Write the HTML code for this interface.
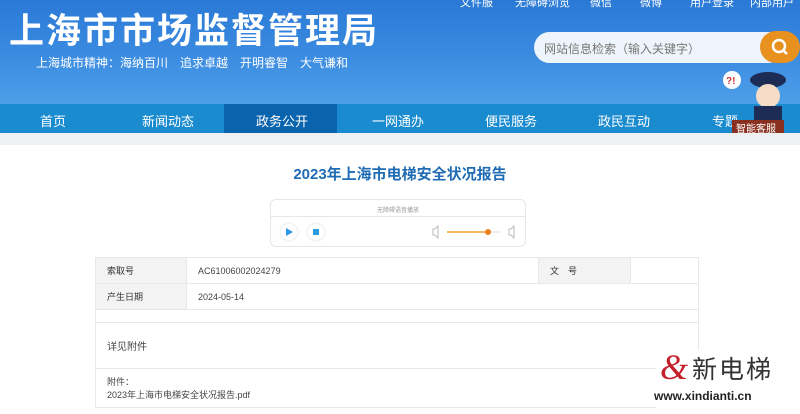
<!DOCTYPE html>
<html><head><meta charset="utf-8"><style>
*{margin:0;padding:0;box-sizing:border-box}
body{width:800px;height:414px;overflow:hidden;background:#fff;font-family:"Liberation Sans","Noto Sans CJK SC",sans-serif;position:relative}
.hdr{position:absolute;left:0;top:0;width:800px;height:104px;background:linear-gradient(180deg,#2a79d6 0%,#3a8ae0 50%,#4d9fe8 100%)}
.title{position:absolute;left:9px;top:3px;font-size:35px;font-weight:bold;color:#fff;letter-spacing:2px}
.sub{position:absolute;left:36px;top:54px;font-size:12px;color:#fff}
.top{position:absolute;top:-6px;font-size:11px;color:#fff}
.search{position:absolute;left:534px;top:32px;width:250px;height:31px;background:#eef4fb;border-radius:16px;font-size:12px;color:#777;padding:8px 0 0 10px}
.sbtn{position:absolute;left:760px;top:31px;width:40px;height:32px;background:#e8911f;border-radius:16px}
.nav{position:absolute;left:0;top:104px;width:800px;height:29px;background:#1a8bcf}
.nav span{position:absolute;top:7px;font-size:13px;color:#fff}
.act{position:absolute;left:224px;top:104px;width:113px;height:29px;background:#0a63ad}
.strip{position:absolute;left:0;top:133px;width:800px;height:12px;background:#eef0f2}
h1{position:absolute;left:0;width:800px;top:163px;text-align:center;font-size:15px;color:#1f6cb5;font-weight:bold}
.player{position:absolute;left:270px;top:199px;width:256px;height:48px;border:1px solid #e6e6e6;border-radius:6px}
table{position:absolute;left:95px;top:257px;width:604px;border-collapse:collapse;font-size:9px;color:#444}
td{border:1px solid #e8e8e8;padding:0 11px}
.l{background:#f3f3f3;color:#333}
</style></head><body>
<div class="hdr"></div>
<div class="title">上海市市场监督管理局</div>
<div class="sub">上海城市精神：海纳百川　追求卓越　开明睿智　大气谦和</div>
<div class="top" style="left:460px">文件服</div><div class="top" style="left:515px">无障碍浏览</div><div class="top" style="left:590px">微信</div><div class="top" style="left:640px">微博</div><div class="top" style="left:690px">用户登录</div><div class="top" style="left:750px">内部用户</div>
<div class="search">网站信息检索（输入关键字）</div>
<div class="sbtn"><svg width="40" height="32"><circle cx="19" cy="15" r="6" fill="none" stroke="#fff" stroke-width="2.5"/><line x1="23" y1="19" x2="27" y2="23" stroke="#fff" stroke-width="2.5"/></svg></div>
<div class="nav"><span style="left:40px">首页</span><span style="left:142px">新闻动态</span><span style="left:372px">一网通办</span><span style="left:485px">便民服务</span><span style="left:598px">政民互动</span><span style="left:712px">专题</span></div>
<div class="act"></div><span style="position:absolute;left:256px;top:111px;font-size:13px;color:#fff">政务公开</span>
<svg style="position:absolute;left:718px;top:66px" width="82" height="72"><circle cx="14" cy="14" r="9" fill="#fff"/><text x="8" y="18" font-size="10" fill="#c33" font-weight="bold">?!</text><ellipse cx="50" cy="14" rx="18" ry="8" fill="#1c2c55"/><circle cx="50" cy="30" r="12" fill="#f5dcc6"/><rect x="36" y="40" width="28" height="16" fill="#1c2c55"/><rect x="14" y="54" width="52" height="18" fill="#8a3020"/><text x="18" y="66" font-size="10" fill="#fff">智能客服</text></svg>
<div class="strip"></div>
<h1>2023年上海市电梯安全状况报告</h1>
<div class="player"><div style="height:17px;border-bottom:1px solid #e6e6e6;text-align:center;font-size:6px;color:#999;padding-top:5px">无障碍语音播放</div>
<svg width="256" height="30"><circle cx="18" cy="15" r="9" fill="none" stroke="#eee"/><polygon points="15,11 15,19 22,15" fill="#2a9be0"/><circle cx="45" cy="15" r="9" fill="none" stroke="#eee"/><rect x="42" y="12" width="6" height="6" fill="#2a9be0"/><path d="M162 12h2l3-3v12l-3-3h-2z" fill="none" stroke="#bbb"/><line x1="176" y1="15" x2="217" y2="15" stroke="#f0a030" stroke-width="1.5"/><circle cx="217" cy="15" r="3" fill="#e8801a"/><line x1="220" y1="15" x2="230" y2="15" stroke="#ddd"/><path d="M238 12h2l3-3v12l-3-3h-2z" fill="none" stroke="#bbb"/></svg></div>
<table>
<tr style="height:26px"><td class="l" style="width:91px">索取号</td><td style="width:352px">AC61006002024279</td><td class="l" style="width:92px">文　号</td><td></td></tr>
<tr style="height:26px"><td class="l">产生日期</td><td colspan="3">2024-05-14</td></tr>
<tr style="height:13px"><td colspan="4"></td></tr>
<tr style="height:46px"><td colspan="4" style="font-size:10px">详见附件</td></tr>
<tr style="height:39px"><td colspan="4">附件：<br>2023年上海市电梯安全状况报告.pdf</td></tr>
</table>
<div style="position:absolute;left:656px;top:350px;width:144px;height:64px;background:#fff"></div>
<div style="position:absolute;left:660px;top:346px;font-size:36px;color:#c4202a;font-style:italic;font-family:'Liberation Serif',serif">&amp;</div>
<div style="position:absolute;left:692px;top:350px;font-size:25px;color:#333;letter-spacing:2px">新电梯</div>
<div style="position:absolute;left:654px;top:389px;font-size:12px;color:#222;font-weight:bold">www.xindianti.cn</div>
</body></html>
